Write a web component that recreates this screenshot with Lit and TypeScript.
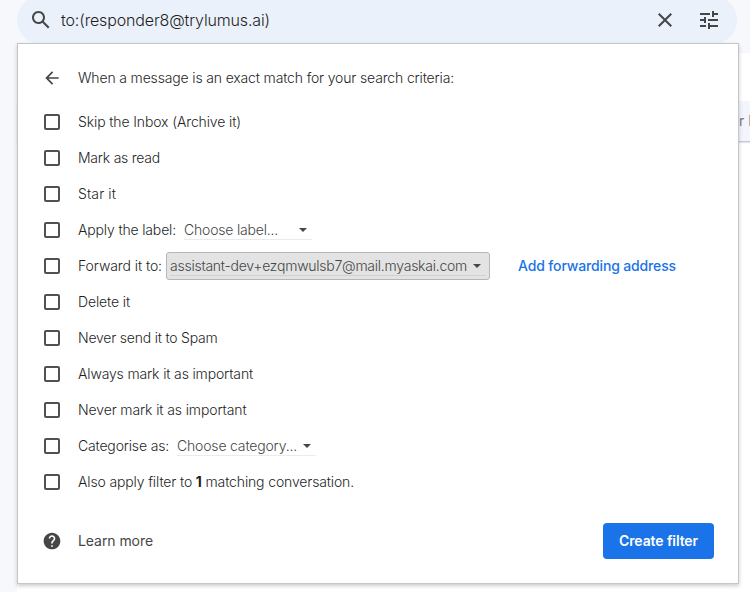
import { LitElement, html, css, svg, nothing } from "lit";
import { customElement, property } from "lit/decorators.js";

/** A single line of text whose tracking is adjusted so that it spans `span` pixels. */
@customElement("tracked-text")
class TrackedText extends LitElement {
  @property({ type: Number }) span = 0;

  static styles = css`
    :host { display: inline-block; white-space: nowrap; flex: none; }
    .line { display: inline-block; font-variant-ligatures: none; }
  `;

  render() {
    return html`<span class="line"><slot></slot></span>`;
  }

  firstUpdated() {
    const line = this.renderRoot.querySelector(".line") as HTMLElement;
    const count = (this.textContent ?? "").length;
    if (!this.span || !count) return;
    const natural = line.getBoundingClientRect().width;
    line.style.letterSpacing = `${(this.span - natural) / count}px`;
    this.style.width = `${this.span}px`;
  }
}

interface Action {
  label: string;
  span: number;
  menu?: { text: string; span: number; kind: string };
  link?: { text: string; span: number };
}

const ACTIONS: Action[] = [
  { label: "Skip the Inbox (Archive it)", span: 163 },
  { label: "Mark as read", span: 82 },
  { label: "Star it", span: 38 },
  { label: "Apply the label:", span: 98, menu: { text: "Choose label...", span: 94, kind: "label" } },
  {
    label: "Forward it to:",
    span: 84,
    menu: { text: "assistant-dev+ezqmwulsb7@mail.myaskai.com", span: 297, kind: "forward" },
    link: { text: "Add forwarding address", span: 158 },
  },
  { label: "Delete it", span: 52 },
  { label: "Never send it to Spam", span: 139.5 },
  { label: "Always mark it as important", span: 175 },
  { label: "Never mark it as important", span: 168.5 },
  { label: "Categorise as:", span: 91, menu: { text: "Choose category...", span: 120, kind: "category" } },
];

const icon = (cls: string, path: string) => html`
  <svg class=${cls} viewBox="0 0 24 24" aria-hidden="true">${svg`<path d=${path}></path>`}</svg>
`;

const SEARCH =
  "M20.49 19l-5.73-5.73C15.53 12.2 16 10.91 16 9.5 16 5.91 13.09 3 9.5 3S3 5.91 3 9.5 5.91 16 9.5 16c1.41 0 2.7-.47 3.77-1.24L19 20.49 20.49 19zM5 9.5C5 7.01 7.01 5 9.5 5S14 7.01 14 9.5 11.99 14 9.5 14 5 11.99 5 9.5z";
const CLOSE =
  "M19 6.41L17.59 5 12 10.59 6.41 5 5 6.41 10.59 12 5 17.59 6.41 19 12 13.41 17.59 19 19 17.59 13.41 12z";
const TUNE =
  "M3 17v2h6v-2H3zM3 5v2h10V5H3zm10 16v-2h8v-2h-8v-2h-2v6h2zM7 9v2H3v2h4v2h2V9H7zm14 4v-2H11v2h10zm-6-4h2V7h4V5h-4V3h-2v6z";
const BACK = "M20 11H7.83l5.59-5.59L12 4l-8 8 8 8 1.41-1.41L7.83 13H20v-2z";
const HELP =
  "M12 2C6.48 2 2 6.48 2 12s4.48 10 10 10 10-4.48 10-10S17.52 2 12 2zm1 17h-2v-2h2v2zm2.07-7.75l-.9.92C13.45 12.9 13 13.5 13 15h-2v-.5c0-1.1.45-2.1 1.17-2.83l1.24-1.26c.37-.36.59-.86.59-1.41 0-1.1-.9-2-2-2s-2 .9-2 2H8c0-2.21 1.79-4 4-4s4 1.79 4 4c0 .88-.36 1.68-.93 2.25z";

@customElement("app-root")
class AppRoot extends LitElement {
  static styles = css`
    :host {
      display: block;
      position: relative;
      width: 750px;
      height: 592px;
      overflow: hidden;
      background: #f6f8fc;
      font-family: Inter, Roboto, "Liberation Sans", sans-serif;
      font-size: 14px;
      font-weight: 300;
      color: #1f1f1f;
    }
    * { box-sizing: border-box; }
    .mailbox {
      position: absolute;
      inset: 53px 0 0 17px;
      background: #fff;
      padding-top: 48px;
    }
    .row {
      height: 41px;
      display: flex;
      align-items: center;
      padding: 0 0 1px 722px;
      background: #f2f5fc;
      border-bottom: 1px solid #c6c8cc;
      box-shadow: 0 1px 1px #e4e5e8;
      white-space: nowrap;
      font-weight: 400;
      color: #747980;
    }
    .search {
      position: relative;
      display: flex;
      align-items: center;
      width: 720px;
      height: 48px;
      margin: -4px 0 0 17px;
      padding: 0 16px 0 12px;
      border-radius: 24px;
      background: #eaf1fb;
      font-size: 16px;
    }
    svg { display: block; flex: none; fill: #444746; }
    .i24 { width: 24px; height: 24px; }
    .i20 { width: 20px; height: 20px; }
    .query { margin-left: 8px; flex: 1; }
    .tune { margin-left: 20px; }
    .panel {
      position: relative;
      width: 722px;
      height: 541px;
      margin: -1px 0 0 17px;
      padding: 24px;
      background: #fff;
      border: 1px solid #c5c6c8;
      box-shadow: 0 2px 4px rgba(0, 0, 0, 0.2);
    }
    .head { display: flex; align-items: center; height: 20px; gap: 16px; margin-bottom: 16px; }
    .head > tracked-text, .action > tracked-text, .foot tracked-text { padding-bottom: 2px; }
    .action { display: flex; align-items: center; height: 36px; padding-left: 2px; }
    .box {
      flex: none;
      width: 16px;
      height: 16px;
      border: 2px solid #505152;
      border-radius: 2px;
      margin-right: 18px;
    }
    .menu { display: flex; align-items: center; color: #444746; }
    .label { width: 128px; height: 20px; margin-left: 8px; border-bottom: 1px solid #ebebeb; }
    .category { width: 139px; height: 20px; margin-left: 8px; border-bottom: 1px solid #ebebeb; }
    .label .arrow { margin-left: 21px; }
    .category .arrow { margin-left: 6px; }
    .forward {
      width: 324px;
      height: 28px;
      margin-left: 4px;
      padding: 0 3px;
      background: #e3e3e3;
      border: 1px solid #b5b6b7;
      border-radius: 3px;
    }
    .forward .inner {
      height: 20px;
      border-bottom: 1px solid #d0d0d0;
    }
    .inner { display: flex; align-items: center; width: 100%; }
    .forward .arrow { margin-left: 6px; }
    .arrow {
      flex: none;
      border: 4.5px solid transparent;
      border-top: 4.5px solid #444746;
      border-bottom: 0;
    }
    .link { margin-left: 28px; color: #1a73e8; font-weight: 500; }
    b { font-weight: 700; }
    .foot { display: flex; align-items: center; margin-top: 23px; height: 36px; }
    .learn { margin-left: 16px; flex: 1; font-weight: 400; color: #444746; }
    .create {
      width: 111px;
      height: 36px;
      padding: 0;
      border: 0;
      border-radius: 4px;
      background: #1a73e8;
      color: #fff;
      font: inherit;
      font-weight: 600;
    }
  `;

  private action(a: Action) {
    return html`
      <div class="action">
        <span class="box" role="checkbox" aria-checked="false"></span>
        <tracked-text span=${a.span}>${a.label}</tracked-text>
        ${a.menu
          ? html`<div class="menu ${a.menu.kind}">
              <div class="inner">
                <tracked-text span=${a.menu.span}>${a.menu.text}</tracked-text>
                <i class="arrow"></i>
              </div>
            </div>`
          : nothing}
        ${a.link
          ? html`<tracked-text class="link" span=${a.link.span}>${a.link.text}</tracked-text>`
          : nothing}
      </div>
    `;
  }

  render() {
    return html`
      <div class="mailbox"><div class="row">r I</div></div>
      <div class="search">
        ${icon("i24", SEARCH)}
        <div class="query"><tracked-text span="209">to:(responder8@trylumus.ai)</tracked-text></div>
        ${icon("i24", CLOSE)} ${icon("i24 tune", TUNE)}
      </div>
      <div class="panel">
        <div class="head">
          ${icon("i20", BACK)}
          <tracked-text span="376">When a message is an exact match for your search criteria:</tracked-text>
        </div>
        ${ACTIONS.map((a) => this.action(a))}
        <div class="action">
          <span class="box" role="checkbox" aria-checked="false"></span>
          <tracked-text span="276">Also apply filter to <b>1</b> matching conversation.</tracked-text>
        </div>
        <div class="foot">
          ${icon("i20", HELP)}
          <div class="learn"><tracked-text span="75">Learn more</tracked-text></div>
          <button class="create"><tracked-text span="79">Create filter</tracked-text></button>
        </div>
      </div>
    `;
  }
}
